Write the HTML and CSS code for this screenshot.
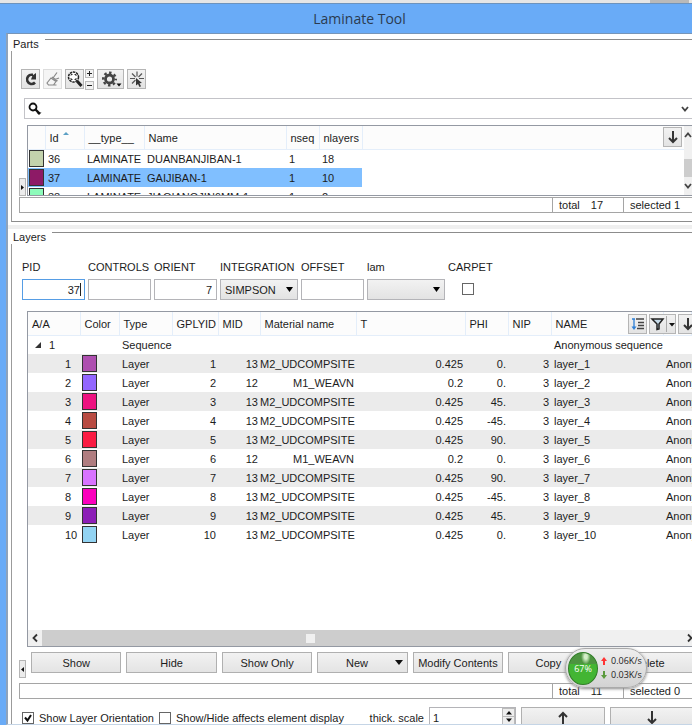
FILE: index.html
```
<!DOCTYPE html>
<html lang="en">
<head>
<meta charset="utf-8">
<title>Laminate Tool</title>
<link rel="stylesheet" href="styles.css">
</head>
<body>
<div class="window">
  <div class="strip"><span class="strip-tab"></span></div>
  <header class="titlebar"><h1>Laminate Tool</h1></header>
  <main class="content">
    <section class="group parts">
      <h2 class="group-title">Parts</h2>
      <div class="group-body">
        <div class="toolbar">
          <button class="tool" aria-label="Refresh"><svg width="16" height="18" viewBox="0 0 16 18"><path d="M12 12.500A4.600 4.600 0 1 1 9 4.800H10" fill="none" stroke="#333" stroke-width="2.600"/><path d="M9.500 5.500 13 3v6.500H8z" fill="#333"/></svg></button>
          <button class="tool faded" aria-label="Erase"><svg width="16" height="18" viewBox="0 0 16 18"><path d="M2 13 6 8l5 3.500L8.500 15H3.500zM7 7l5.500 4M8 8 12 2.500M10 9.500l4-1.500M3.500 15h8" fill="none" stroke="#888" stroke-width="1.200"/></svg></button>
          <button class="tool" aria-label="Zoom"><svg width="16" height="18" viewBox="0 0 16 18"><circle cx="6.500" cy="7" r="5" fill="#fff" stroke="#222" stroke-width="1.500" stroke-dasharray="2.500 .7"/><path d="M4 5.500V4.500H5.500M7.500 4.500H9V6M4 8v1.500h1.500M7.500 9.500H9V8" fill="none" stroke="#333"/><path d="m10 11 4.500 5" stroke="#222" stroke-width="3"/></svg></button>
          <div class="steps">
            <button class="step" aria-label="Expand"><svg width="7" height="7"><path d="M1 3.500h5M3.500 1v5" stroke="#222"/></svg></button>
            <button class="step" aria-label="Collapse"><svg width="7" height="7"><path d="M1 3.500h5" stroke="#222"/></svg></button>
          </div>
          <button class="tool wide" aria-label="Settings"><svg width="25" height="18" viewBox="0 0 25 18"><circle cx="11.500" cy="9" r="4" fill="none" stroke="#444" stroke-width="2.800"/><circle cx="11.500" cy="9" r="6.300" fill="none" stroke="#444" stroke-width="2.400" stroke-dasharray="2.470 2.478" stroke-dashoffset="1.200"/><path d="M18.500 13.500h5L21 16.500z" fill="#111"/></svg></button>
          <button class="tool" aria-label="Pick"><svg width="16" height="18" viewBox="0 0 16 18"><path d="M8 1.500v5M3 3.500l3.500 3.500M13 3.500 9.500 7M1 8.500h5M10 8.500h5M6.500 10 3 13.500" stroke="#555" stroke-width="1.200"/><path d="m7 8 6 5-2.500.3 1.500 3-1.500.7-1.500-3L7 15.500z" fill="#333"/></svg></button>
        </div>
        <div class="search">
          <svg width="14" height="14" viewBox="0 0 14 14"><circle cx="5" cy="5" r="3.500" fill="none" stroke="#111" stroke-width="1.800"/><path d="m7.500 7.500 4 4" stroke="#111" stroke-width="2.400"/><path d="M8.500 10.500h5L11 13z" fill="#111"/></svg>
          <input type="text" aria-label="Search parts">
          <svg class="chev" width="8" height="6" viewBox="0 0 8 6"><path d="m1 1 3 3.500L7 1" fill="none" stroke="#444" stroke-width="1.800"/></svg>
        </div>
        <div class="side-row">
          <button class="fold" aria-label="Unfold panel"><svg width="5" height="7"><path d="M1 1v5l3-2.500z" fill="#111"/></svg></button>
          <div class="grid parts-grid">
            <table>
              <colgroup><col class="w-sw"><col class="w-id"><col class="w-ty"><col class="w-nm"><col class="w-ns"><col class="w-nl"><col></colgroup>
              <thead><tr><th></th><th class="sorted">Id<svg width="6" height="4"><path d="M0 4 3 1l3 3z" fill="#5b9fc4"/></svg></th><th>__type__</th><th>Name</th><th>nseq</th><th>nlayers</th><th></th></tr></thead>
              <tbody>
                <tr><td class="sw"><i class="swatch c36"></i></td><td>36</td><td>LAMINATE</td><td>DUANBANJIBAN-1</td><td>1</td><td>18</td><td></td></tr>
                <tr class="picked"><td class="sw"><i class="swatch c37"></i></td><td>37</td><td>LAMINATE</td><td>GAIJIBAN-1</td><td>1</td><td>10</td><td></td></tr>
                <tr><td class="sw"><i class="swatch c38"></i></td><td>38</td><td>LAMINATE</td><td>JIAQIANGJIN6MM-1</td><td>1</td><td>2</td><td></td></tr>
              </tbody>
            </table>
            <button class="tool corner" aria-label="Scroll to selection"><svg width="16" height="18" viewBox="0 0 16 18"><path d="M8 3v11M4 10l4 4 4-4" fill="none" stroke="#333" stroke-width="2"/></svg></button>
            <div class="vbar">
              <svg width="8" height="6" viewBox="0 0 8 6"><path d="m1 5 3-3.500L7 5" fill="none" stroke="#444" stroke-width="1.800"/></svg>
              <span class="vthumb"></span>
              <svg width="8" height="6" viewBox="0 0 8 6"><path d="m1 1 3 3.500L7 1" fill="none" stroke="#444" stroke-width="1.800"/></svg>
            </div>
          </div>
        </div>
        <div class="status"><span class="fill"></span><span class="total">total<b>17</b></span><span class="sel">selected 1</span></div>
      </div>
    </section>
    <div class="splitter"></div>
    <section class="group layers">
      <h2 class="group-title">Layers</h2>
      <div class="group-body">
        <div class="fields">
          <div class="field"><label for="pid">PID</label><input id="pid" class="focus" type="text" value="37"></div>
          <div class="field"><label for="controls">CONTROLS</label><input id="controls" type="text"></div>
          <div class="field"><label for="orient">ORIENT</label><input id="orient" type="text" value="7"></div>
          <div class="field big"><label for="integration">INTEGRATION</label><select id="integration"><option>SIMPSON</option></select></div>
          <div class="field"><label for="offset">OFFSET</label><input id="offset" type="text"></div>
          <div class="field big"><label for="lam">lam</label><select id="lam"><option></option></select></div>
          <div class="field"><label for="carpet">CARPET</label><input id="carpet" type="checkbox"></div>
        </div>
        <div class="grid layers-grid">
          <table>
            <colgroup><col class="l-aa"><col class="l-co"><col class="l-ty"><col class="l-gp"><col class="l-mi"><col class="l-ma"><col class="l-t"><col class="l-ph"><col class="l-ni"><col class="l-na"><col></colgroup>
            <thead><tr><th>A/A</th><th>Color</th><th>Type</th><th>GPLYID</th><th>MID</th><th>Material name</th><th>T</th><th>PHI</th><th>NIP</th><th>NAME</th><th></th></tr></thead>
            <tbody>
              <tr><td class="root"><svg width="7" height="7"><path d="M6 0v6H0z" fill="#333"/></svg>1</td><td></td><td>Sequence</td><td></td><td></td><td></td><td></td><td></td><td></td><td>Anonymous sequence</td><td></td></tr>
              <tr><td class="n">1</td><td class="sw"><i class="swatch k1"></i></td><td>Layer</td><td class="r">1</td><td class="r">13</td><td class="r">M2_UDCOMPSITE</td><td class="r">0.425</td><td class="r">0.</td><td class="r">3</td><td>layer_1</td><td>Anony</td></tr>
              <tr><td class="n">2</td><td class="sw"><i class="swatch k2"></i></td><td>Layer</td><td class="r">2</td><td class="r">12</td><td class="r">M1_WEAVN</td><td class="r">0.2</td><td class="r">0.</td><td class="r">3</td><td>layer_2</td><td>Anony</td></tr>
              <tr><td class="n">3</td><td class="sw"><i class="swatch k3"></i></td><td>Layer</td><td class="r">3</td><td class="r">13</td><td class="r">M2_UDCOMPSITE</td><td class="r">0.425</td><td class="r">45.</td><td class="r">3</td><td>layer_3</td><td>Anony</td></tr>
              <tr><td class="n">4</td><td class="sw"><i class="swatch k4"></i></td><td>Layer</td><td class="r">4</td><td class="r">13</td><td class="r">M2_UDCOMPSITE</td><td class="r">0.425</td><td class="r">-45.</td><td class="r">3</td><td>layer_4</td><td>Anony</td></tr>
              <tr><td class="n">5</td><td class="sw"><i class="swatch k5"></i></td><td>Layer</td><td class="r">5</td><td class="r">13</td><td class="r">M2_UDCOMPSITE</td><td class="r">0.425</td><td class="r">90.</td><td class="r">3</td><td>layer_5</td><td>Anony</td></tr>
              <tr><td class="n">6</td><td class="sw"><i class="swatch k6"></i></td><td>Layer</td><td class="r">6</td><td class="r">12</td><td class="r">M1_WEAVN</td><td class="r">0.2</td><td class="r">0.</td><td class="r">3</td><td>layer_6</td><td>Anony</td></tr>
              <tr><td class="n">7</td><td class="sw"><i class="swatch k7"></i></td><td>Layer</td><td class="r">7</td><td class="r">13</td><td class="r">M2_UDCOMPSITE</td><td class="r">0.425</td><td class="r">90.</td><td class="r">3</td><td>layer_7</td><td>Anony</td></tr>
              <tr><td class="n">8</td><td class="sw"><i class="swatch k8"></i></td><td>Layer</td><td class="r">8</td><td class="r">13</td><td class="r">M2_UDCOMPSITE</td><td class="r">0.425</td><td class="r">-45.</td><td class="r">3</td><td>layer_8</td><td>Anony</td></tr>
              <tr><td class="n">9</td><td class="sw"><i class="swatch k9"></i></td><td>Layer</td><td class="r">9</td><td class="r">13</td><td class="r">M2_UDCOMPSITE</td><td class="r">0.425</td><td class="r">45.</td><td class="r">3</td><td>layer_9</td><td>Anony</td></tr>
              <tr><td class="n">10</td><td class="sw"><i class="swatch k10"></i></td><td>Layer</td><td class="r">10</td><td class="r">13</td><td class="r">M2_UDCOMPSITE</td><td class="r">0.425</td><td class="r">0.</td><td class="r">3</td><td>layer_10</td><td>Anony</td></tr>
            </tbody>
          </table>
          <div class="head-tools">
            <button class="tool" aria-label="Outline order"><svg width="16" height="18" viewBox="0 0 16 18"><path d="M2 4h3M4 4v9" stroke="#2d7fd6" stroke-width="1.300" fill="none"/><path d="M1.500 11.500h5L4 15z" fill="#2d7fd6"/><path d="M6 4h8M8 7.500h6M8 10.500h6M7 13.500h7" stroke="#444" stroke-width="1.400"/></svg></button>
            <button class="tool wide" aria-label="Filter"><svg width="26" height="18" viewBox="0 0 26 18"><path d="M2 4h11L9 9v5l-2 .5V9z" fill="#c8dcea" stroke="#222" stroke-width="1.500"/><path d="M16.500 1v16" stroke="#aaa"/><path d="M19 8h6l-3 3.500z" fill="#111"/></svg></button>
            <button class="tool" aria-label="Scroll to layer"><svg width="16" height="18" viewBox="0 0 16 18"><path d="M8 3v11M4 10l4 4 4-4" fill="none" stroke="#333" stroke-width="2"/></svg></button>
          </div>
          <div class="hbar">
            <svg width="14" height="16" viewBox="0 0 14 16"><path d="M9 4.500 5.500 8 9 11.500" fill="none" stroke="#333" stroke-width="1.800"/></svg>
            <span class="hthumb"><i></i></span>
            <svg width="14" height="16" viewBox="0 0 14 16"><path d="m2 4.500 3.500 3.500L2 11.500" fill="none" stroke="#333" stroke-width="1.800"/></svg>
          </div>
        </div>
        <div class="actions">
          <button class="fold" aria-label="Fold panel"><svg width="5" height="7"><path d="M4 1v5L1 3.500z" fill="#111"/></svg></button>
          <button class="btn">Show</button>
          <button class="btn">Hide</button>
          <button class="btn">Show Only</button>
          <button class="btn menu">New<svg width="8" height="5"><path d="M0 0h8L4 5z" fill="#111"/></svg></button>
          <button class="btn">Modify Contents</button>
          <button class="btn copy">Copy</button>
          <button class="btn">Delete</button>
        </div>
        <div class="status"><span class="fill"></span><span class="total">total<b>11</b></span><span class="sel">selected 0</span></div>
        <div class="options">
          <input id="orientation" type="checkbox" checked><label for="orientation">Show Layer Orientation</label>
          <input id="affects" type="checkbox"><label for="affects">Show/Hide affects element display</label>
          <label class="scale-label" for="scale">thick. scale</label>
          <div class="spin"><input id="scale" type="text" value="1"><span class="spin-arrows"><svg width="12" height="15" viewBox="0 0 12 15"><path d="M3 5.500h6L6 2zM3 9.500h6L6 13z" fill="#111"/><path d="M0 7.500h12" stroke="#bbb"/></svg></span></div>
          <button class="btn" aria-label="Move up"><svg width="12" height="14" viewBox="0 0 12 14"><path d="M6 14V2M2 6l4-4 4 4" fill="none" stroke="#333" stroke-width="2"/></svg></button>
          <button class="btn" aria-label="Move down"><svg width="12" height="14" viewBox="0 0 12 14"><path d="M6 0v12M2 8l4 4 4-4" fill="none" stroke="#333" stroke-width="2"/></svg></button>
        </div>
      </div>
    </section>
  </main>
  <aside class="meter">
    <span class="ball">67%</span>
    <span class="rates">
      <span><svg width="6" height="8"><path d="M3 0 6 4H4v4H2V4H0z" fill="#f33"/></svg>0.06K/s</span>
      <span><svg width="6" height="8"><path d="M3 8 0 4h2V0h2v4h2z" fill="#5a9a3c"/></svg>0.03K/s</span>
    </span>
  </aside>
</div>
</body>
</html>
```
FILE: styles.css
```
* { box-sizing: border-box; }
body, button, input, select {
  font: 11px/16px "Liberation Sans", Arial, sans-serif;
  color: #1c1c1c;
}
body { margin: 0; overflow: hidden; }
svg { display: block; flex: none; }
button, input { padding: 0; }

.window { position: relative; height: 100vh; display: flex; flex-direction: column; overflow: hidden; background: #69abf7; }
.strip { flex: none; height: 4px; background: #e6e6e6; border-bottom: 1px solid #6d93bd; display: flex; justify-content: flex-end; }
.strip-tab { width: 39px; margin-right: 3px; background: #b9b9b9; }
.titlebar { flex: none; height: 29px; padding-left: 27px; display: flex; align-items: center; justify-content: center; }
h1 { margin: 0; font: 14px/20px "Open Sans", "Noto Sans", sans-serif; color: #2b3b50; }
.content { flex: 1; min-height: 0; display: flex; flex-direction: column; margin-left: 6px; background: #fff; border-top: 1px solid #7695b8; border-left: 2px solid #8fa3bb; border-bottom: 1px solid #c5d5e6; }

.group { display: flex; flex-direction: column; }
.group-title { margin: 0; padding-left: 5px; height: 17px; font-size: 11px; line-height: 20px; font-weight: normal; display: flex; gap: 6px; }
.group-title::after { content: ""; flex: 1; margin-top: 5px; border-top: 1px solid #8c8c8c; }
.group-body { margin-left: 3px; border-left: 1px solid #9b9b9b; display: flex; flex-direction: column; }
.parts .group-body { height: 171px; border-bottom: 1px solid #8c8c8c; padding-top: 17px; }
.layers { flex: 1; min-height: 0; }
.layers .group-body { flex: 1; min-height: 0; padding-top: 15px; }
.splitter { flex: none; height: 4px; margin-top: 3px; margin-bottom: -2px; background: #efefef; }

.toolbar { display: flex; gap: 3px; padding-left: 9px; height: 22px; align-items: center; }
.tool { flex: none; width: 19px; height: 20px; border: 1px solid #b5b5b5; background: linear-gradient(#f2f2f2, #e3e3e3); display: flex; align-items: center; justify-content: center; }
.tool.wide { width: 27px; }
.tool.faded { border-color: #ddd; background: #f5f5f5; }
.steps { display: flex; flex-direction: column; gap: 3px; margin-left: -2px; }
.step { width: 9px; height: 9px; border: 1px solid #bbb; background: #f2f2f2; display: flex; align-items: center; justify-content: center; }

.search { flex: none; display: flex; align-items: center; height: 21px; margin: 8px 0 6px 12px; padding: 0 3px; border: 1px solid #c3c3c8; border-right: 0; }
.search input { flex: 1; min-width: 0; border: 0; outline: 0; background: none; }

.side-row { display: flex; align-items: flex-end; padding-left: 7px; }
.fold { flex: none; width: 7px; height: 18px; border: 1px solid #b5b5b5; background: #ececec; display: flex; align-items: center; justify-content: center; }
.grid { border: 1px solid #9499a3; border-right: 0; position: relative; overflow: hidden; }
.parts-grid { flex: 1; height: 71px; margin-left: 1px; }
table { border-collapse: collapse; table-layout: fixed; width: 100%; }
th, td { padding: 0 3px; font-weight: normal; text-align: left; white-space: nowrap; }
th { height: 23px; padding: 1px 0 0 4px; background: #fcfcfc; border-right: 1px solid #e4eefa; border-bottom: 1px solid #e4eefa; }
td { height: 19px; }
.sorted { line-height: 12px; }
.sorted svg { display: inline-block; vertical-align: 7px; margin-left: 4px; }
.picked td:not(:last-child) { background: #80bfff; }
td.sw { padding: 0 1px; }
.swatch { display: block; width: 15px; height: 17px; border: 1px solid #333; }
.w-sw { width: 17px; } .w-id { width: 39px; } .w-ty { width: 60px; } .w-nm { width: 142px; } .w-ns { width: 33px; } .w-nl { width: 43px; }
.c36 { background: #c3d2ac; } .c37 { background: #8d1a66; } .c38 { background: #8dfbba; }
.corner { position: absolute; right: 10px; top: 1px; }
.vbar { position: absolute; right: 0; top: 0; bottom: 0; width: 8px; padding: 6px 0; background: #f0f0f0; display: flex; flex-direction: column; justify-content: space-between; }
.vthumb { height: 18px; margin-top: 14px; background: #cdcdcd; }

.status { flex: none; display: flex; height: 16px; margin: 1px 0 0 7px; border: 1px solid #a5a5a5; border-right: 0; line-height: 15px; }
.fill { flex: 1; }
.total { width: 71px; padding-left: 6px; border-left: 1px solid #a5a5a5; }
.total b { font-weight: normal; margin-left: 11px; }
.sel { width: 69px; padding-left: 6px; border-left: 1px solid #a5a5a5; }

.fields { flex: none; display: flex; gap: 3px; padding-left: 10px; }
.field { width: 63px; display: flex; flex-direction: column; gap: 4px; white-space: nowrap; }
.field.big { width: 78px; }
.field input[type=text], select { width: 100%; height: 21px; border: 1px solid #b4b4b8; border-radius: 0; text-align: right; padding: 0 4px; }
.field input.focus { border-color: #569de5; background: linear-gradient(#222, #222) no-repeat right 3px center / 1px 13px; }
select { appearance: none; text-align: left; background: url("data:image/svg+xml,%3Csvg xmlns='http://www.w3.org/2000/svg' width='7' height='5'%3E%3Cpath d='M0 0h7L3.5 5z'/%3E%3C/svg%3E") no-repeat right 4px center, linear-gradient(#f2f2f2, #e3e3e3); }
input[type=checkbox] { appearance: none; flex: none; width: 12px; height: 12px; margin: 0; border: 1px solid #666; background: #fff; }
.field input[type=checkbox] { margin: 4px 0 0 14px; }
input[type=checkbox]:checked { background: url("data:image/svg+xml,%3Csvg xmlns='http://www.w3.org/2000/svg' width='10' height='10'%3E%3Cpath d='M2 4.500l2.500 3L8 2' fill='none' stroke='%23111' stroke-width='2'/%3E%3C/svg%3E"); }

.layers-grid { flex: 1; min-height: 0; margin: 11px 0 0 15px; display: flex; flex-direction: column; justify-content: space-between; }
.layers-grid tr:nth-child(even) td { background: #ebebeb; }
.layers-grid .sw { padding: 0 2px; }
.root svg { display: inline-block; margin: 0 7px 0 4px; }
td.n { padding-left: 37px; padding-right: 0; }
td.r { text-align: right; padding: 0 2px 0 0; }
.l-aa { width: 52px; } .l-co { width: 39px; } .l-ty { width: 53px; } .l-gp { width: 46px; } .l-mi { width: 42px; } .l-ma { width: 96px; } .l-t { width: 109px; } .l-ph { width: 43px; } .l-ni { width: 43px; } .l-na { width: 112px; }
.k1 { background: #ae4fb0; } .k2 { background: #9366ff; } .k3 { background: #ed1280; } .k4 { background: #b84b42; } .k5 { background: #fa1b42; }
.k6 { background: #b07d80; } .k7 { background: #d873ff; } .k8 { background: #fb00bd; } .k9 { background: #8c1eb7; } .k10 { background: #92d3f2; }
.head-tools { position: absolute; top: 2px; right: -5px; display: flex; gap: 2px; }
.hbar { flex: none; height: 16px; display: flex; background: #f0f0f0; justify-content: space-between; margin-right: -8px; }
.hthumb { flex: none; width: 80%; margin-right: auto; background: #cdcdcd; display: flex; align-items: center; justify-content: center; }
.hthumb i { width: 9px; height: 9px; background: #f0f0f0; }

.actions { flex: none; display: flex; gap: 5px; padding-left: 7px; margin: 5px -2px 4px 0; height: 26px; }
.actions .fold { align-self: flex-end; }
.btn { flex: 1 1 90px; min-width: 0; height: 21px; border: 1px solid #b0b0b0; background: linear-gradient(#f2f2f2, #e4e4e4); white-space: nowrap; display: flex; align-items: center; justify-content: center; }
.actions .copy { padding-right: 10px; }
.menu { position: relative; padding-right: 11px; }
.menu svg { position: absolute; right: 4px; top: 7px; }

.options { flex: none; display: flex; align-items: center; gap: 5px; height: 17px; margin: 8px -2px 0 0; padding-left: 10px; overflow: hidden; white-space: nowrap; }
.options input[type=checkbox] { margin-top: 4px; }
.options label { padding-top: 4px; }
.scale-label { margin-left: auto; }
.spin { width: 87px; height: 21px; align-self: flex-start; flex: none; display: flex; border: 1px solid #b4b4b8; }
.spin input { flex: 1; min-width: 0; border: 0; padding-left: 3px; }
.spin-arrows { width: 13px; border: 1px solid #bbb; background: #eee; }
.options .btn { flex: 0 0 84px; align-self: flex-start; }

.meter { position: absolute; right: 45px; bottom: 37px; width: 82px; height: 40px; padding: 0 2px; display: flex; align-items: center; gap: 3px; border: 1px solid #aaa; border-radius: 20px; background: linear-gradient(#eee, #d3d3d3); box-shadow: 0 1px 3px #888; }
.ball { flex: none; width: 30px; height: 33px; border: 1px solid #2f7d26; border-radius: 50%; background: radial-gradient(ellipse at 60% 12%, #d4efc8 0 6%, transparent 20%), linear-gradient(#4d9440 0 36%, #43b533 37%); color: #fff; font: 9px/32px "Open Sans", sans-serif; text-align: center; }
.rates { font: 9px/14px "Open Sans", sans-serif; }
.rates span { display: flex; align-items: center; gap: 4px; }
```
